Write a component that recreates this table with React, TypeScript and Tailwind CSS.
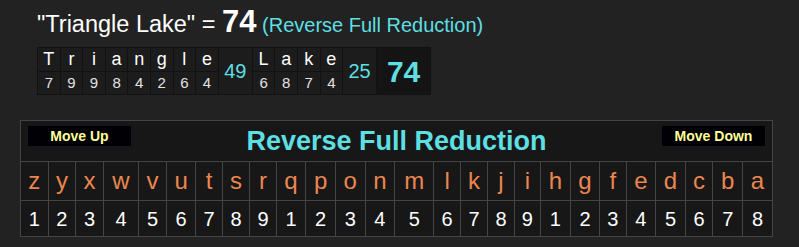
import React from "react";

const CYAN = "text-[#5edfe2]";

function Word({ letters, nums }: { letters: string[]; nums: number[] }) {
  return (
    <div
      className="grid gap-px"
      style={{ gridTemplateColumns: `repeat(${letters.length}, 21.6px)` }}
    >
      {letters.map((l, i) => (
        <div
          key={"l" + i}
          className="h-[22.5px] bg-[#1c1c1c] flex items-center justify-center text-[18px] text-white leading-none"
        >
          {l}
        </div>
      ))}
      {nums.map((n, i) => (
        <div
          key={"n" + i}
          className="h-[22.5px] bg-[#1c1c1c] flex items-center justify-center text-[15px] text-[#e2e2e2] leading-none"
        >
          {n}
        </div>
      ))}
    </div>
  );
}

export default function App() {
  const alpha = "zyxwvutsrqponmlkjihgfedcba".split("");
  const vals = [1, 2, 3, 4, 5, 6, 7, 8, 9, 1, 2, 3, 4, 5, 6, 7, 8, 9, 1, 2, 3, 4, 5, 6, 7, 8];
  return (
    <div className="w-[799px] h-[247px] bg-[#222222] overflow-hidden font-['Liberation_Sans',Arial,sans-serif]">
      <div className="pl-[37px] pt-[7px]">
        <div className="h-[40px] leading-[30px] text-white text-[23.5px] whitespace-pre">
          <span>"Triangle Lake" = </span>
          <span className="font-bold text-[31px]">74</span>
          <span className={`${CYAN} text-[20px]`}> (Reverse Full Reduction)</span>
        </div>
        <div className="inline-flex bg-[#121212] p-px gap-px">
          <Word letters={"Triangle".split("")} nums={[7, 9, 9, 8, 4, 2, 6, 4]} />
          <div className={`w-[33px] bg-[#1c1c1c] flex items-center justify-center text-[20px] ${CYAN}`}>49</div>
          <Word letters={"Lake".split("")} nums={[6, 8, 7, 4]} />
          <div className={`w-[33px] bg-[#1c1c1c] flex items-center justify-center text-[20px] ${CYAN}`}>25</div>
          <div className={`w-[53px] bg-[#141414] flex items-center justify-center text-[30px] font-bold ${CYAN}`}>74</div>
        </div>
      </div>
      <div className="pl-[20px] pt-[25px]">
        <table className="w-[753px] border-collapse bg-[#171717]">
          <tbody>
            <tr>
              <td colSpan={26} className="h-[41px] border border-[#444] p-0 align-top">
                <div className="flex justify-between px-[7px]">
                  <div className="mt-[5px] w-[103px] h-[20px] bg-[#000005] flex items-center justify-center text-[#ffff99] font-bold text-[14px]">
                    Move Up
                  </div>
                  <div className={`${CYAN} font-bold text-[27px] leading-[40px]`}>Reverse Full Reduction</div>
                  <div className="mt-[5px] w-[103px] h-[20px] bg-[#000005] flex items-center justify-center text-[#ffff99] font-bold text-[14px]">
                    Move Down
                  </div>
                </div>
              </td>
            </tr>
            <tr>
              {alpha.map((a, i) => (
                <td
                  key={i}
                  className="h-[39px] border border-[#444] text-center text-[24px] text-[#eb8650] px-[3px] leading-none"
                >
                  {a}
                </td>
              ))}
            </tr>
            <tr>
              {vals.map((v, i) => (
                <td
                  key={i}
                  className="h-[36px] border border-[#444] text-center text-[20px] text-white px-[3px] leading-none"
                >
                  {v}
                </td>
              ))}
            </tr>
          </tbody>
        </table>
      </div>
    </div>
  );
}
